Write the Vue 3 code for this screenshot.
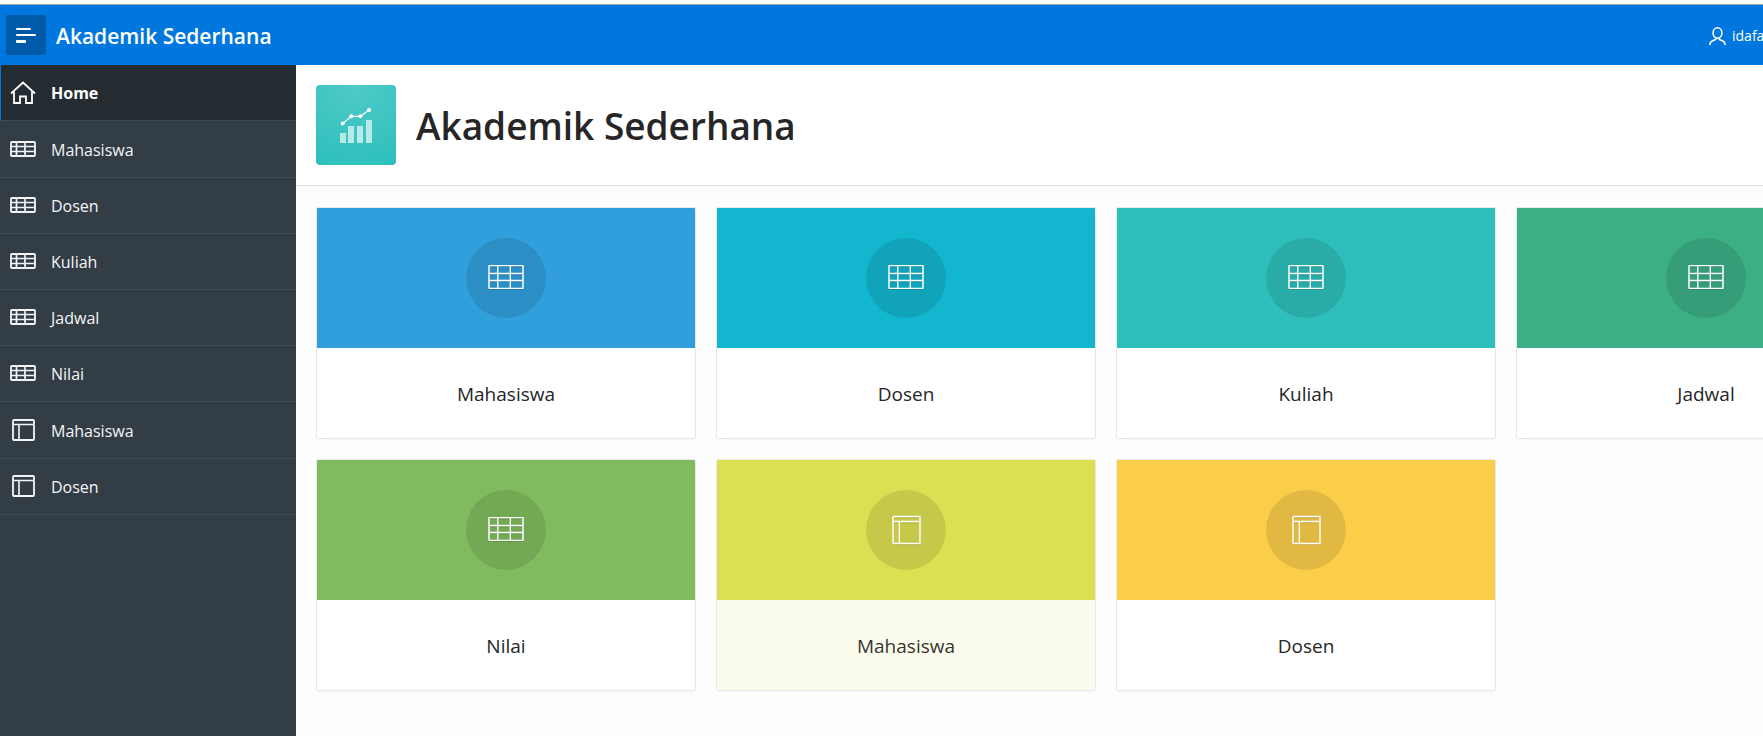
<script setup>
const menuGroups = [
  [{ label: 'Home', icon: 'home', active: true }],
  [
    { label: 'Mahasiswa', icon: 'table' },
    { label: 'Dosen', icon: 'table' },
    { label: 'Kuliah', icon: 'table' },
    { label: 'Jadwal', icon: 'table' },
    { label: 'Nilai', icon: 'table' },
  ],
  [
    { label: 'Mahasiswa', icon: 'layout' },
    { label: 'Dosen', icon: 'layout' },
  ],
]

const cards = [
  { label: 'Mahasiswa', icon: 'table', tone: 'blue' },
  { label: 'Dosen', icon: 'table', tone: 'cyan' },
  { label: 'Kuliah', icon: 'table', tone: 'teal' },
  { label: 'Jadwal', icon: 'table', tone: 'green' },
  { label: 'Nilai', icon: 'table', tone: 'leaf' },
  { label: 'Mahasiswa', icon: 'layout', tone: 'lime', hovered: true },
  { label: 'Dosen', icon: 'layout', tone: 'amber' },
]
</script>

<template>
  <div class="page">
    <header class="topbar">
      <button class="toggle" type="button" aria-label="Menu">
        <svg width="20" height="15" viewBox="0 0 20 15" fill="#fff" aria-hidden="true">
          <rect x="0" y="0" width="15" height="2" rx="1" />
          <rect x="0" y="6" width="20" height="2" rx="1" />
          <rect x="0" y="12" width="10" height="3" rx="1" />
        </svg>
      </button>
      <a class="brand" href="#">Akademik Sederhana</a>
      <a class="user" href="#">
        <svg class="user-icon" width="17" height="18" viewBox="0 0 17 18" fill="none" stroke="#fff" stroke-width="1.6" aria-hidden="true">
          <ellipse cx="8.500" cy="6" rx="4.400" ry="5.200" />
          <path d="M1 18v-1c0-1.500.8-2.400 2.200-3l3.300-1.500c.6-.3.8-.7.8-1.400M16 18v-1c0-1.500-.8-2.400-2.200-3l-3.300-1.500c-.6-.3-.8-.7-.8-1.400" />
        </svg>
        <span>idafa</span>
      </a>
    </header>

    <div class="body">
      <nav class="sidebar" aria-label="Navigation">
        <ul v-for="(group, g) in menuGroups" :key="g" class="group">
          <li v-for="item in group" :key="item.label">
            <a class="item" :class="{ active: item.active }" href="#">
              <span class="item-icon">
                <svg v-if="item.icon === 'home'" width="26" height="23" viewBox="0 0 26 23" fill="none" stroke="#fff" stroke-width="1.8" aria-hidden="true">
                  <path d="M1 12.500 13 1.500l12 11" />
                  <path d="M4 10.500V22h6v-6.500h6V22h6V10.500" />
                </svg>
                <svg v-else-if="item.icon === 'table'" width="26" height="16" viewBox="0 0 26 16" fill="none" stroke="#f4f5f6" aria-hidden="true">
                  <rect x="1" y="1" width="24" height="14" rx="1" stroke-width="1.800" />
                  <path d="M6.500 1v14M15 1v14M1 5.500h24M1 10.500h24" stroke-width="1.700" />
                </svg>
                <svg v-else width="24" height="22" viewBox="0 0 24 22" fill="none" stroke="#f4f5f6" aria-hidden="true">
                  <rect x="2" y="1" width="21" height="20" rx="1" stroke-width="1.800" />
                  <path d="M2 5.500h21M8 5.500V21" stroke-width="1.600" />
                </svg>
              </span>
              <span>{{ item.label }}</span>
            </a>
          </li>
        </ul>
      </nav>

      <main class="content">
        <section class="hero">
          <span class="logo">
            <svg width="34" height="36" viewBox="0 0 34 36" aria-hidden="true">
              <g fill="#fff" fill-opacity=".64">
                <rect x="1" y="26" width="6" height="10" />
                <rect x="9" y="19" width="6" height="17" />
                <rect x="18" y="19" width="6" height="17" />
                <rect x="27" y="13" width="6" height="23" />
              </g>
              <path d="M3.700 16.500 12.300 9.300h9L30 3" fill="none" stroke="#fff" stroke-width="1.200" />
              <g fill="#fff">
                <circle cx="3.700" cy="16.500" r="2" />
                <circle cx="12.300" cy="9.300" r="2" />
                <circle cx="21.300" cy="9.300" r="2" />
                <circle cx="30" cy="3" r="2" />
              </g>
            </svg>
          </span>
          <h1>Akademik Sederhana</h1>
        </section>

        <section class="cards">
          <a v-for="(card, c) in cards" :key="c" class="card" :class="{ hovered: card.hovered }" href="#">
            <span class="cover" :class="card.tone">
              <span class="disc">
                <svg v-if="card.icon === 'table'" class="glyph table-glyph" width="36" height="24" viewBox="0 0 36 24" fill="none" stroke="#fff" aria-hidden="true">
                  <rect x="1" y=".5" width="34" height="23" rx=".8" stroke-width="1.500" />
                  <path d="M1 8.500h34M1 15.500h34M9.800.5v23M22.300.5v23" stroke-width="1.400" />
                </svg>
                <svg v-else class="glyph" width="30" height="30" viewBox="0 0 30 30" fill="none" stroke="#fff" aria-hidden="true">
                  <rect x="2" y="1.500" width="27" height="27" rx=".8" stroke-width="1.500" />
                  <path d="M2 6.500h27M8.300 6.500v22" stroke-width="1.400" />
                </svg>
              </span>
            </span>
            <span class="caption">{{ card.label }}</span>
          </a>
        </section>
      </main>
    </div>
  </div>
</template>

<style>
html,
body {
  margin: 0;
  background: #fdfdfd;
}
body {
  overflow: hidden;
}
</style>

<style scoped>
.page {
  display: flex;
  flex-direction: column;
  box-sizing: border-box;
  min-height: 100vh;
  padding-top: 4px;
  overflow: hidden;
  background: #fff;
  color: #262626;
  font-family: "Open Sans", "Noto Sans", sans-serif;
}
a {
  color: inherit;
  text-decoration: none;
}
.topbar {
  display: flex;
  align-items: center;
  height: 60px;
  padding-left: 6px;
  border-top: 1px solid #a3a9ae;
  background: #0076df;
  color: #fff;
}
.toggle {
  display: flex;
  align-items: center;
  justify-content: center;
  width: 40px;
  height: 40px;
  padding: 0;
  border: 0;
  border-radius: 2px;
  background: #0059a9;
}
.brand {
  padding-top: 2px;
  margin-left: 10px;
  font-size: 21px;
  font-weight: 600;
  line-height: 28px;
}
.user {
  display: flex;
  align-items: center;
  gap: 6px;
  width: 54px;
  padding-top: 1px;
  margin-left: auto;
  overflow: hidden;
  font-size: 14px;
  line-height: 20px;
}
.user-icon {
  flex: none;
}
.body {
  display: flex;
  flex: 1;
}
.sidebar {
  display: flex;
  flex: none;
  flex-direction: column;
  gap: 1px;
  width: 296px;
  background: #333d46;
  color: #f4f5f6;
}
.group {
  margin: 0;
  padding: 0;
  list-style: none;
}
.item {
  display: flex;
  align-items: center;
  gap: 15px;
  box-sizing: border-box;
  min-height: 56px;
  padding-top: 1px;
  padding-left: 10px;
  border-bottom: 1px solid #414b54;
  font-size: 16px;
  line-height: 24px;
}
.item.active {
  padding-left: 9px;
  border-left: 1px solid #0076df;
  background: #252c31;
  color: #fff;
  font-weight: 700;
}
.item-icon {
  display: flex;
  justify-content: center;
  width: 26px;
  padding-bottom: 2px;
}
.content {
  flex: 1;
  min-width: 0;
  background: #fdfdfd;
}
.hero {
  display: flex;
  align-items: center;
  gap: 20px;
  padding: 20px;
  border-bottom: 1px solid #e1e1e1;
  background: #fff;
}
.logo {
  display: flex;
  align-items: center;
  justify-content: center;
  width: 80px;
  height: 80px;
  border-radius: 4px;
  background: radial-gradient(circle at 50% 0, #4fcac7, #2dbfbc);
}
h1 {
  padding-top: 2px;
  margin: 0;
  font-size: 37px;
  font-weight: 600;
  line-height: 48px;
}
.cards {
  display: grid;
  grid-template-columns: repeat(4, minmax(380px, 1fr));
  gap: 20px;
  padding: 21px 20px;
}
.card {
  display: flex;
  flex-direction: column;
  overflow: hidden;
  border: 1px solid #e8e8e8;
  border-radius: 2px;
  background: #fff;
  box-shadow: 0 2px 4px -2px rgba(0, 0, 0, 0.06);
}
.card.hovered {
  background: #fbfcee;
  color: #36362f;
}
.cover {
  display: flex;
  align-items: center;
  justify-content: center;
  padding: 30px;
}
.disc {
  display: flex;
  align-items: center;
  justify-content: center;
  width: 80px;
  height: 80px;
  border-radius: 50%;
  background: rgba(0, 0, 0, 0.1);
}
.glyph {
  filter: drop-shadow(0 1px 0 rgba(0, 0, 0, 0.12));
}
.table-glyph {
  margin-bottom: 2px;
}
.caption {
  padding: 33px 16px 31px;
  font-size: 19px;
  line-height: 26px;
  text-align: center;
}
.blue { background: #309fdb; }
.cyan { background: #13b6cf; }
.teal { background: #2ebfbc; }
.green { background: #3caf85; }
.leaf { background: #81bb5f; }
.lime { background: #dddf53; }
.amber { background: #fbce4a; }
</style>
